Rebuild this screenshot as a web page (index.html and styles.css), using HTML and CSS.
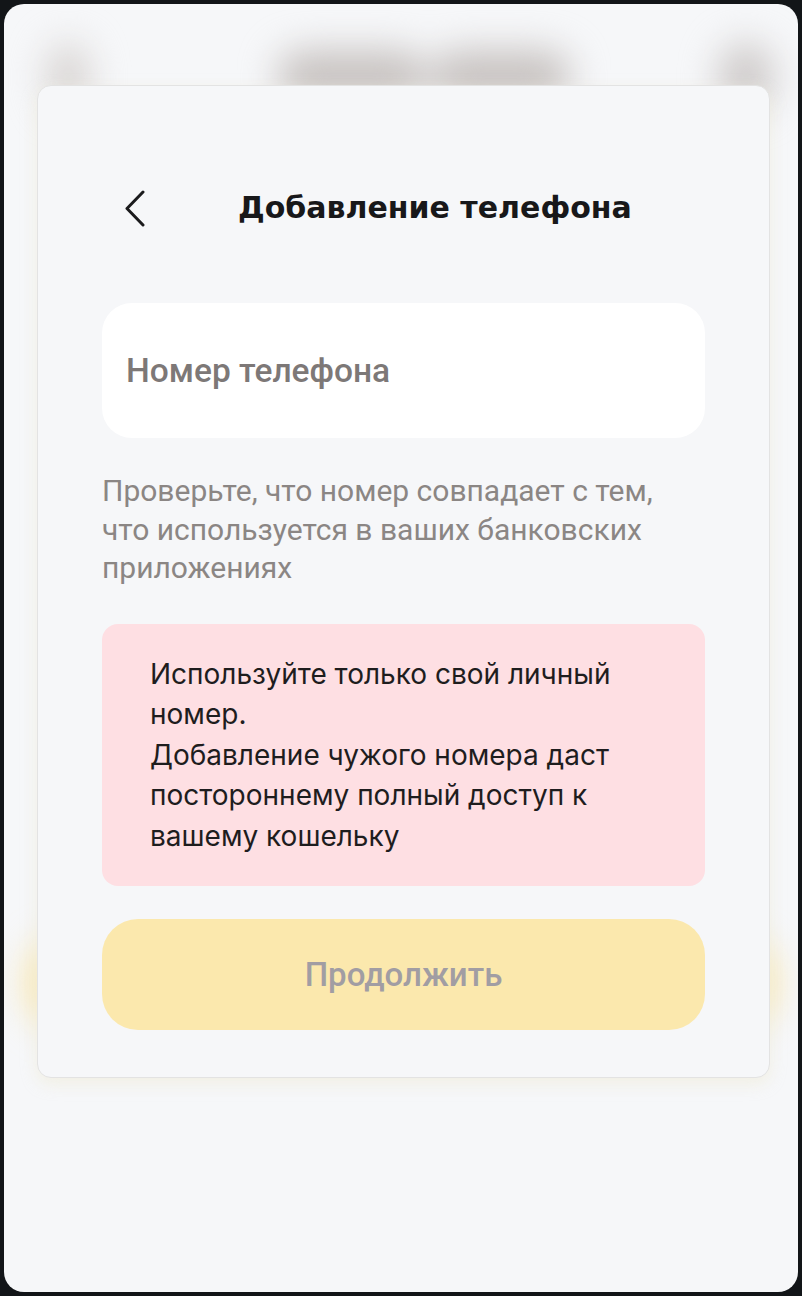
FILE: index.html
```html
<!DOCTYPE html>
<html lang="ru">
<head>
<meta charset="utf-8">
<title>Добавление телефона</title>
<link rel="stylesheet" href="styles.css">
</head>
<body>
<div class="screen">
  <div class="backdrop" aria-hidden="true">
    <div class="bd-top">
      <span class="bd-dot"></span>
      <span class="bd-title"><span class="bd-w1"></span><span class="bd-w2"></span></span>
      <span class="bd-dot bd-dot-r"></span>
    </div>
    <div class="bd-button"></div>
  </div>

  <div class="modal">
    <div class="header">
      <button class="back" type="button" aria-label="Назад">
        <svg width="24" height="38" viewBox="0 0 24 38"><path d="M20 3 L4 19.5 L20 36" fill="none" stroke="#1b1b1d" stroke-width="3" stroke-linecap="round" stroke-linejoin="round"/></svg>
      </button>
      <h1 class="title">Добавление телефона</h1>
    </div>

    <div class="field">Номер телефона</div>

    <p class="hint">Проверьте, что номер совпадает с тем,<br>что используется в ваших банковских<br>приложениях</p>

    <div class="warning">Используйте только свой личный<br>номер.<br>Добавление чужого номера даст<br>постороннему полный доступ к<br>вашему кошельку</div>

    <button class="continue" type="button">Продолжить</button>
  </div>
</div>
</body>
</html>
```

FILE: styles.css
```css
html, body {
  margin: 0;
  padding: 0;
}
body {
  background: #121518;
  width: 802px;
  height: 1296px;
  overflow: hidden;
}
.screen {
  position: relative;
  margin: 4px 4px 4px 4px;
  height: 1288px;
  background: #f6f7f9;
  border-radius: 20px;
  overflow: hidden;
}
.backdrop {
  display: flex;
  flex-direction: column;
  height: 100%;
  filter: blur(18px);
}
.bd-top {
  display: flex;
  align-items: center;
  justify-content: space-between;
  padding: 38px 24px 0 42px;
}
.bd-dot {
  width: 44px;
  height: 70px;
  border-radius: 50%;
  background: #d8d4d2;
}
.bd-dot-r {
  width: 56px;
  height: 70px;
  background: #cecac9;
}
.bd-title {
  display: flex;
  gap: 4px;
  margin-left: 40px;
}
.bd-w1, .bd-w2 {
  height: 54px;
  border-radius: 27px;
  background: #c8c3c1;
}
.bd-w1 { width: 150px; }
.bd-w2 { width: 140px; }
.bd-button {
  margin: 826px 24px 0 24px;
  height: 90px;
  border-radius: 40px;
  background: #fbe6a6;
}

.modal {
  position: absolute;
  left: 33px;
  top: 81px;
  width: 733px;
  height: 993px;
  box-sizing: border-box;
  background: #f6f7f9;
  border: 1px solid #e3e3e3;
  border-radius: 14px;
  box-shadow: 0 6px 16px rgba(240, 236, 220, 0.7);
  padding: 100px 64px 0 64px;
  display: flex;
  flex-direction: column;
}
.header {
  display: flex;
  align-items: center;
  height: 44px;
}
.back {
  border: 0;
  background: none;
  padding: 0;
  margin-left: 21px;
  width: 24px;
  height: 38px;
  display: flex;
  cursor: pointer;
}
.title {
  margin: 0 0 0 91px;
  font-family: "DejaVu Sans", Inter, sans-serif;
  font-weight: 700;
  font-size: 30px;
  line-height: 44px;
  color: #18181a;
  white-space: nowrap;
}
.field {
  margin-top: 73px;
  height: 135px;
  box-sizing: border-box;
  background: #ffffff;
  border-radius: 30px;
  padding: 0 24px;
  display: flex;
  align-items: center;
  font-family: Roboto, "Liberation Sans", sans-serif;
  font-weight: 500;
  font-size: 33.5px;
  color: #7d7877;
}
.hint {
  margin: 34px 0 0 0;
  font-family: Roboto, "Liberation Sans", sans-serif;
  font-size: 30px;
  line-height: 38.5px;
  color: #8b8684;
}
.warning {
  margin-top: 36px;
  background: #fedfe3;
  border-radius: 16px;
  padding: 30px 40px 30px 48px;
  font-family: Inter, "Noto Sans", sans-serif;
  font-size: 28px;
  line-height: 40.5px;
  color: #1e1d1e;
}
.continue {
  margin-top: 33px;
  height: 111px;
  border: 0;
  border-radius: 36px;
  background: #fbe8ad;
  font-family: Roboto, "Liberation Sans", sans-serif;
  font-weight: 500;
  font-size: 33px;
  color: #a19da3;
  cursor: pointer;
}
```
